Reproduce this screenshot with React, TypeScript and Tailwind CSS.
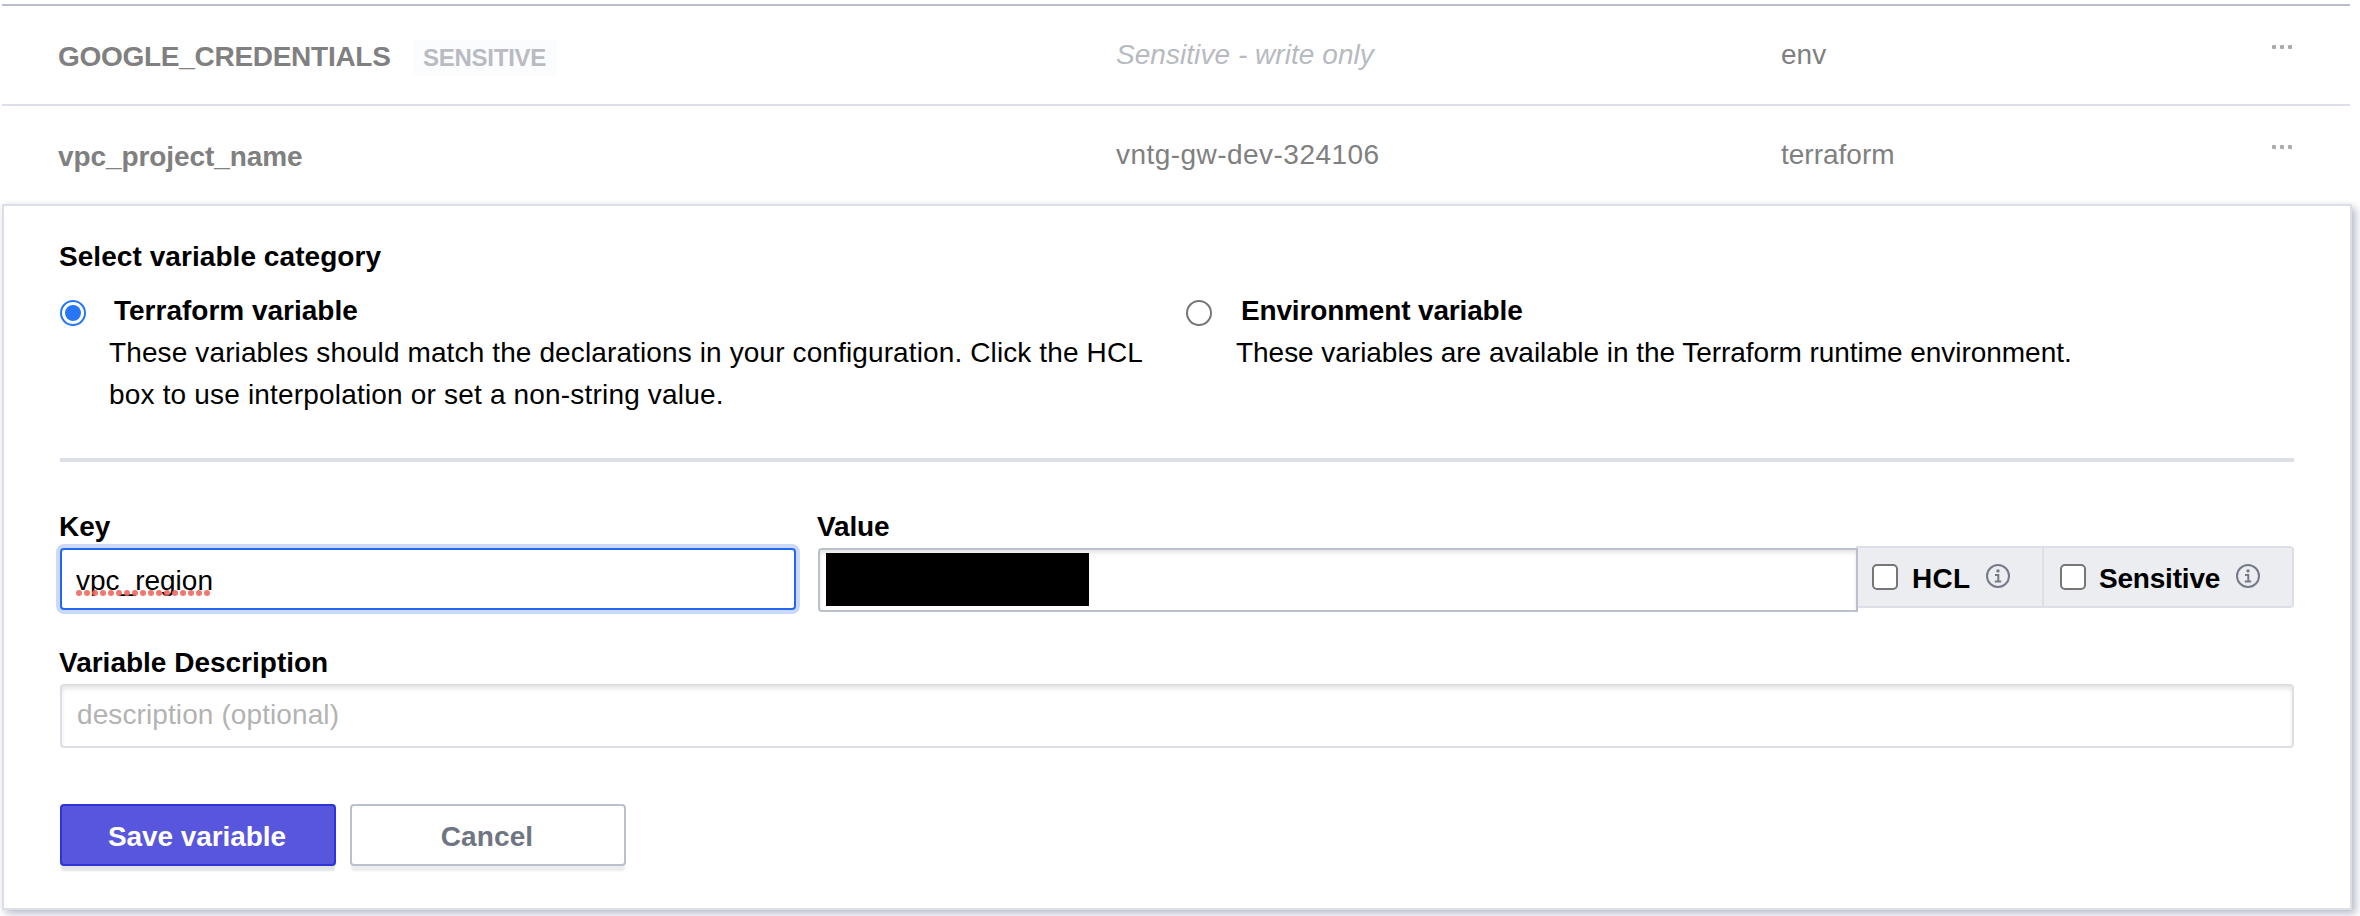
import type { ReactNode } from "react";

function Row({ name, badge, value, muted, category }: { name: string; badge?: string; value: string; muted?: boolean; category: string }) {
  return (
    <div className="flex h-[100px] w-[2348px] text-[#808080]">
      <div className="flex w-[1056px] shrink-0 pl-14">
        <span className={badge ? "pt-[30px] font-bold tracking-[-0.28px]" : "pt-[30px] font-bold tracking-[-0.08px]"}>{name}</span>
        {badge && (
          <span className="ml-[22px] mt-[34px] flex h-9 w-36 items-center justify-center rounded-[4px] bg-[#fbfcfe] text-2xl leading-8 font-bold tracking-[-0.25px] text-[#babbc2]">
            {badge}
          </span>
        )}
      </div>
      <div className="w-[665px] shrink-0 pl-[58px] pt-[28px]">
        <span className={muted ? "tracking-[0.05px] text-[#b7bac0] italic" : "tracking-[0.46px]"}>{value}</span>
      </div>
      <div className="w-[489px] shrink-0 pl-[58px] pt-[28px]">{category}</div>
      <div className="flex gap-1 pt-[39px] pl-[60px]">
        <i className="size-1 rounded-[1px] bg-[#aaaaae]" />
        <i className="size-1 rounded-[1px] bg-[#aaaaae]" />
        <i className="size-1 rounded-[1px] bg-[#aaaaae]" />
      </div>
    </div>
  );
}

function Option({ checked, title, children }: { checked?: boolean; title: string; children: ReactNode }) {
  return (
    <div className="flex w-[1126px]">
      <svg viewBox="0 0 26 26" className="mt-[10px] size-[26px] shrink-0">
        <circle cx="13" cy="13" r="12" fill="#fff" stroke={checked ? "#2776f6" : "#767676"} strokeWidth="2" />
        {checked && <circle cx="13" cy="13" r="8" fill="#2776f6" />}
      </svg>
      <div className={checked ? "ml-[23px]" : "ml-6"}>
        <div className={checked ? "pl-[5px] font-bold whitespace-nowrap" : "pl-[5px] font-bold tracking-[-0.16px] whitespace-nowrap"}>{title}</div>
        <div className="whitespace-nowrap">{children}</div>
      </div>
    </div>
  );
}

function Info() {
  return (
    <svg viewBox="0 0 24 24" className="-mt-0.5 size-6" fill="none" stroke="#747a88" strokeWidth="2">
      <circle cx="12" cy="12" r="11" />
      <path d="M9 11h3.3v6.3M8.8 17.5h6.4" />
      <circle cx="12" cy="6.9" r="1.7" fill="#747a88" stroke="none" />
    </svg>
  );
}

function Check() {
  return <span className="size-[26px] rounded-[5px] border-2 border-[#767676] bg-white" />;
}

export default function App() {
  return (
    <div className="h-[916px] w-[2360px] overflow-hidden bg-white pl-0.5 font-['Liberation_Sans',Arial,sans-serif] text-[28px] leading-[42px] text-black">
      <div className="pt-1">
        <div className="w-[2348px] border-t-2 border-[#b9bdcb]">
          <Row name="GOOGLE_CREDENTIALS" badge="SENSITIVE" value="Sensitive - write only" muted category="env" />
        </div>
        <div className="-mt-0.5 w-[2348px] border-t-2 border-[#dce0e6]">
          <Row name="vpc_project_name" value="vntg-gw-dev-324106" category="terraform" />
        </div>
      </div>
      <section className="relative -mt-0.5 h-[706px] w-[2350px] border-2 border-[#dce0e6] bg-white pl-14 shadow-[4px_4px_8px_0_rgba(110,120,150,0.45),0_0_6px_rgba(0,0,0,0.05)]">
        <h2 className="-ml-px pt-[30px] font-bold tracking-[0.06px]">Select variable category</h2>
        <div className="mt-3 flex">
          <Option checked title="Terraform variable">
            <span className="block tracking-[0.12px]">These variables should match the declarations in your configuration. Click the HCL</span>
            <span className="block tracking-[0.18px]">box to use interpolation or set a non-string value.</span>
          </Option>
          <Option title="Environment variable">
            <span className="tracking-[-0.04px]">These variables are available in the Terraform runtime environment.</span>
          </Option>
        </div>
        <div className="mt-[42px] h-1 w-[2234px] bg-[#dce0e6]" />
        <div className="mt-11 flex">
          <div className="w-[758px]">
            <label className="-ml-px block font-bold">Key</label>
            <div className="h-[62px] w-[736px] rounded-[4px] border-2 border-[#2269f2] bg-white pt-[10px] pl-[15px] shadow-[0_0_0_4px_#ccd9fa]">
              <span className="relative -left-px inline-block">
                vpc_region
                <svg className="absolute top-[30px] left-0 h-1.5 w-[137px]" viewBox="0 0 137 6">
                  <path d="M3 3H137" stroke="#f0675f" strokeOpacity=".9" strokeWidth="6" strokeLinecap="round" strokeDasharray="0 8" />
                </svg>
              </span>
            </div>
          </div>
          <div>
            <label className="-ml-px block font-bold tracking-[-0.15px]">Value</label>
            <div className="flex">
              <div className="relative z-10 h-16 w-[1040px] rounded-l-[4px] border-2 border-[#bac1cc] bg-white pt-[3px] pl-1.5 shadow-[inset_0_3px_4px_rgba(0,0,0,0.1)]">
                <div className="h-[53px] w-[263px] bg-black" />
              </div>
              <div className="-mt-0.5 -ml-0.5 flex h-[62px] w-[438px] rounded-r-[4px] border-2 border-[#dce0e6] bg-[#ecedf1] font-bold">
                <div className="flex w-[186px] items-center border-r-2 border-[#dce0e6] pl-[14px]">
                  <Check />
                  <span className="ml-[14px] w-[74px] pt-1 tracking-[0.3px]">HCL</span>
                  <Info />
                </div>
                <div className="flex items-center pl-4">
                  <Check />
                  <span className="ml-[13px] w-[137px] pt-1 tracking-[-0.2px]">Sensitive</span>
                  <Info />
                </div>
              </div>
            </div>
          </div>
        </div>
        <label className="mt-[30px] -ml-px block font-bold">Variable Description</label>
        <div className="h-16 w-[2234px] rounded-[4px] border-2 border-[#dce0e6] pt-2 pl-[15px] tracking-[0.1px] text-[#b3b3b3] shadow-[inset_0_3px_4px_rgba(0,0,0,0.1)]">
          description (optional)
        </div>
        <div className="mt-14 flex gap-3.5 font-bold">
          <button className="h-[62px] w-[276px] rounded-[4px] border-2 border-[#2e34d6] bg-[#5856dc] pt-1 pr-0.5 tracking-[-0.08px] text-white shadow-[0_6px_2px_-1px_#e2e4e5]">Save variable</button>
          <button className="h-[62px] w-[276px] rounded-[4px] border-2 border-[#bac1cc] bg-white pt-1 pr-0.5 tracking-[0.1px] text-[#6f7682] shadow-[0_6px_2px_-1px_#ebecee]">Cancel</button>
        </div>
      </section>
    </div>
  );
}
